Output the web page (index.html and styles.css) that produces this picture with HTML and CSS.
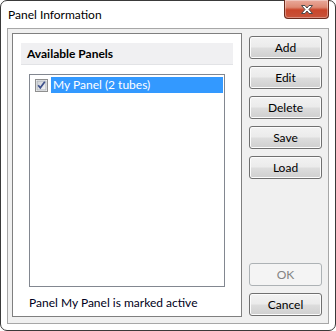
FILE: index.html
```html
<!DOCTYPE html>
<html>
<head>
<meta charset="utf-8">
<link rel="stylesheet" href="styles.css">
</head>
<body>
<div class="window">
  <div class="titlebar">
    <span class="title">Panel Information</span>
    <div class="close">
      <svg width="16" height="11" viewBox="0 0 16 11">
        <path d="M2.5 1.5 H6 L8 4 L10 1.5 H13.5 L10 5.5 L13.5 9.5 H10 L8 7 L6 9.5 H2.5 L6 5.5 Z" fill="#fff" stroke="#4a4a4a" stroke-width="1" stroke-linejoin="round"/>
      </svg>
    </div>
  </div>
  <div class="client">
    <div class="group">
      <div class="group-header">Available Panels</div>
      <div class="list">
        <div class="row">
          <span class="check">
            <svg width="13" height="13" viewBox="0 0 13 13">
              <defs>
                <linearGradient id="cb" x1="0" y1="0" x2="1" y2="1">
                  <stop offset="0" stop-color="#cbcfd5"/>
                  <stop offset="1" stop-color="#f6f6f6"/>
                </linearGradient>
              </defs>
              <rect x="0.5" y="0.5" width="12" height="12" fill="#fff" stroke="#8f8f8f"/>
              <rect x="2" y="2" width="9" height="9" fill="url(#cb)" stroke="#aeb3b9" stroke-width="1"/>
              <path d="M3.2 6.2 L5.3 8.8 L9.8 2.8" fill="none" stroke="#3c4f8a" stroke-width="1.7"/>
            </svg>
          </span>
          <span class="item selected">My Panel (2 tubes)</span>
        </div>
      </div>
      <div class="status">Panel My Panel is marked active</div>
    </div>
    <div class="buttons">
      <button class="btn">Add</button>
      <button class="btn">Edit</button>
      <button class="btn">Delete</button>
      <button class="btn">Save</button>
      <button class="btn">Load</button>
      <button class="btn disabled push">OK</button>
      <button class="btn">Cancel</button>
    </div>
  </div>
</div>
</body>
</html>
```
FILE: styles.css
```css
html, body {
  margin: 0;
  padding: 0;
  background: #ffffff;
}
body {
  width: 336px;
  height: 331px;
  font-family: Lato, "Noto Sans", sans-serif;
  font-size: 12px;
  color: #000;
}
.window {
  box-sizing: border-box;
  width: 336px;
  height: 331px;
  border: 1px solid #3a3a3a;
  border-radius: 7px;
  background: #ffffff;
  padding: 0 6px 6px 6px;
  display: flex;
  flex-direction: column;
}
.titlebar {
  height: 27px;
  display: flex;
  justify-content: space-between;
  align-items: flex-start;
  flex: none;
}
.title {
  padding-left: 1px;
  margin-top: 6px;
  line-height: 16px;
  color: #000;
}
.close {
  margin-top: -1px;
  margin-right: 0px;
  width: 45px;
  height: 19px;
  box-sizing: border-box;
  border: 1px solid #6b2a1c;
  border-top: none;
  border-radius: 0 0 4px 4px;
  background: linear-gradient(#e9a99b 0%, #de8a74 40%, #c9452a 55%, #c8533a 100%);
  display: flex;
  align-items: center;
  justify-content: center;
  box-shadow: inset 0 0 0 1px rgba(255,255,255,0.35);
}
.client {
  flex: 1;
  box-sizing: border-box;
  border: 1px solid #a7a7a7;
  background: #f0f0f0;
  padding: 4px 5px 6px 4px;
  display: flex;
  gap: 7px;
}
.group {
  width: 230px;
  box-sizing: border-box;
  border: 1px solid #7f7f7f;
  background: #ffffff;
  padding: 9px 8px 0 8px;
  display: flex;
  flex-direction: column;
}
.group-header {
  height: 21px;
  background: #f0f0f2;
  border-bottom: 1px solid #e2e3e6;
  font-weight: bold;
  line-height: 21px;
  padding-left: 6px;
  flex: none;
}
.list {
  margin: 9px 8px 0 8px;
  height: 213px;
  box-sizing: border-box;
  border: 1px solid #828790;
  background: #fff;
  padding: 2px 1px 0 5px;
  flex: none;
}
.row {
  display: flex;
  align-items: center;
  height: 16px;
}
.check {
  width: 13px;
  height: 13px;
  display: block;
  margin-right: 3px;
}
.check svg { display: block; }
.item {
  flex: 1;
  height: 16px;
  line-height: 16px;
  padding-left: 2px;
}
.selected {
  background: #3399ff;
  color: #ffffff;
}
.status {
  padding: 8px 0 0 8px;
  line-height: 16px;
  color: #000020;
}
.buttons {
  width: 73px;
  display: flex;
  flex-direction: column;
  gap: 7px;
  padding: 3px 0 1px 0;
}
.btn {
  height: 23px;
  width: 73px;
  box-sizing: border-box;
  border: 1px solid #707070;
  border-radius: 3px;
  background: linear-gradient(#f2f2f2 0%, #ebebeb 48%, #dddddd 52%, #cfcfcf 100%);
  box-shadow: inset 0 0 0 1px #fcfcfc;
  font-family: Lato, "Noto Sans", sans-serif;
  font-size: 12px;
  color: #000;
  padding: 0;
  line-height: 20px;
}
.btn.disabled {
  border-color: #adb2b5;
  background: #f4f4f4;
  box-shadow: none;
  color: #838383;
}
.push {
  margin-top: auto;
}
```
